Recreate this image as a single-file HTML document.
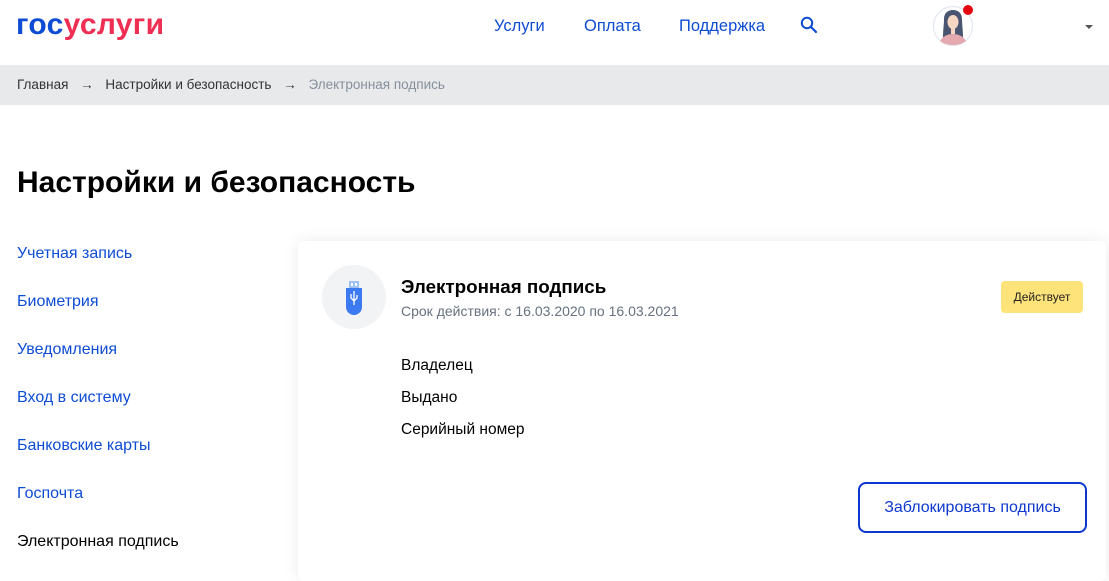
<!DOCTYPE html>
<html><head><meta charset="utf-8"><style>
*{margin:0;padding:0;box-sizing:border-box}
body{width:1109px;height:561px;overflow:hidden;background:#fff;font-family:"Liberation Sans",sans-serif;position:relative;color:#0b1f33}
.a{position:absolute;white-space:nowrap}
.nav{font-size:16.5px;color:#0d4cd3;top:17px}
.side{left:17px;font-size:16px;color:#0d4cd3}
</style></head><body>
<div class="a" style="left:16px;top:8px;font-size:30px;font-weight:bold;letter-spacing:0.3px"><span style="color:#0d4cd3">гос</span><span style="color:#ee2f53">услуги</span></div>
<div class="a nav" style="left:494px">Услуги</div>
<div class="a nav" style="left:584px">Оплата</div>
<div class="a nav" style="left:679px">Поддержка</div>
<svg class="a" style="left:800px;top:16px" width="18" height="18" viewBox="0 0 18 18"><circle cx="7" cy="7" r="5.2" fill="none" stroke="#0d4cd3" stroke-width="2"/><path d="M11 11l5 5" stroke="#0d4cd3" stroke-width="2.2" stroke-linecap="round"/></svg>
<svg class="a" style="left:930px;top:2px" width="48" height="46" viewBox="0 0 48 46">
<circle cx="23" cy="24" r="19.5" fill="#fff" stroke="#e3e8f0" stroke-width="1.2"/>
<path d="M13 36c0-9 1-13 1-19 0-6 4-9 9-9s9 3 9 9c0 6 1 10 1 19z" fill="#4a5571"/>
<ellipse cx="23" cy="20" rx="5.5" ry="7" fill="#f6d7c3"/>
<path d="M21 26h4v6h-4z" fill="#f6d7c3"/>
<path d="M10 39c3-5 8-7 13-7s10 2 13 7c-4 3-8 4-13 4s-9-1-13-4z" fill="#e3a9ae"/>
<circle cx="38" cy="8" r="5" fill="#e3000f"/></svg>
<div class="a" style="left:1085px;top:25px;width:0;height:0;border-left:4px solid transparent;border-right:4px solid transparent;border-top:4px solid #555"></div>
<div class="a" style="left:0;top:65px;width:1109px;height:40px;background:#e8e9eb"></div>
<div class="a" style="left:17px;top:77px;font-size:13.5px;color:#333">Главная <span style="margin:0 8px">→</span> Настройки и безопасность <span style="margin:0 8px">→</span> <span style="color:#86909c">Электронная подпись</span></div>
<div class="a" style="left:17px;top:166px;font-size:30px;font-weight:bold;color:#000">Настройки и безопасность</div>
<div class="a side" style="top:245px">Учетная запись</div>
<div class="a side" style="top:293px">Биометрия</div>
<div class="a side" style="top:341px">Уведомления</div>
<div class="a side" style="top:389px">Вход в систему</div>
<div class="a side" style="top:437px">Банковские карты</div>
<div class="a side" style="top:485px">Госпочта</div>
<div class="a side" style="top:533px;color:#000">Электронная подпись</div>
<div class="a" style="left:298px;top:241px;width:808px;height:340px;background:#fff;border-radius:6px;box-shadow:0 0 16px rgba(0,0,0,.08)"></div>
<div class="a" style="left:322px;top:265px;width:64px;height:64px;border-radius:50%;background:#f1f3f5"></div>
<svg class="a" style="left:344px;top:281px" width="20" height="34" viewBox="0 0 20 34"><rect x="5" y="0" width="10" height="7" fill="#9fc1f5"/><rect x="7" y="2" width="2" height="3" fill="#fff"/><rect x="11" y="2" width="2" height="3" fill="#fff"/><path d="M2 7h16v19a8 8 0 0 1-16 0z" fill="#3b7af0"/><path d="M10 10v14M7 13v4l3 3M13 14v3l-3 3" stroke="#fff" stroke-width="1.3" fill="none"/></svg>
<div class="a" style="left:401px;top:276px;font-size:18.8px;font-weight:bold;color:#000">Электронная подпись</div>
<div class="a" style="left:401px;top:303px;font-size:14px;color:#66727f">Срок действия: с 16.03.2020 по 16.03.2021</div>
<div class="a" style="left:1001px;top:281px;width:82px;height:32px;background:#fee37a;border-radius:4px;font-size:12px;color:#222;text-align:center;line-height:32px">Действует</div>
<div class="a" style="left:401px;top:357px;font-size:15.5px;color:#000">Владелец</div>
<div class="a" style="left:401px;top:389px;font-size:15.5px;color:#000">Выдано</div>
<div class="a" style="left:401px;top:421px;font-size:15.5px;color:#000">Серийный номер</div>
<div class="a" style="left:858px;top:482px;width:229px;height:51px;border:2px solid #0d38d0;border-radius:8px;font-size:16px;color:#0d38d0;text-align:center;line-height:47px">Заблокировать подпись</div>
</body></html>
